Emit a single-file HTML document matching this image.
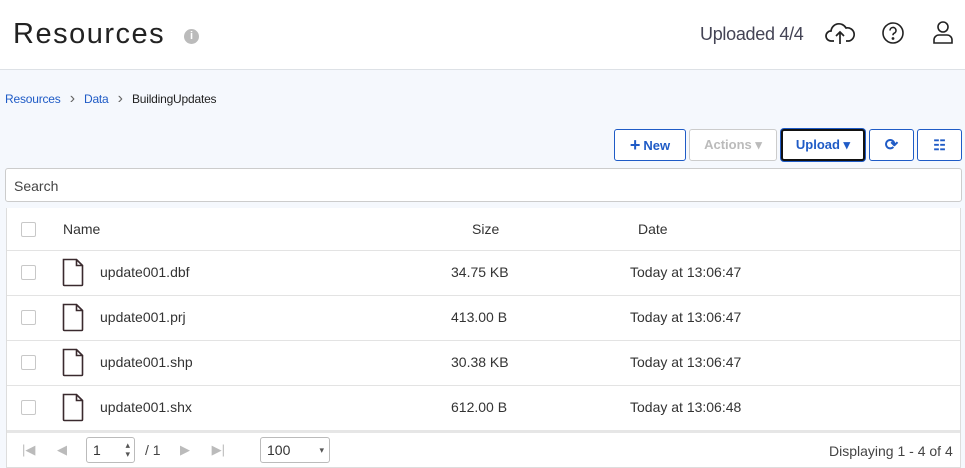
<!DOCTYPE html><html><head><style>
body{margin:0;width:965px;height:468px;overflow:hidden;background:#f5f8fd;font-family:"Liberation Sans",sans-serif;position:relative}
.a{position:absolute}
.hdr{left:0;top:0;width:965px;height:69px;background:#fff;border-bottom:1px solid #dde1e6}
.btn{position:absolute;top:129px;height:32px;box-sizing:border-box;border:1px solid #1f5bc6;border-radius:3px;background:#fff;color:#1f5bc6;font-weight:bold;font-size:13px;display:flex;align-items:center;justify-content:center}
.row{position:absolute;left:7px;width:953px;height:45px;background:#fff;border-top:1px solid #e3e3e3;font-size:14px;color:#333}
.row span{position:absolute;top:13px}
.cb{position:absolute;left:14px;top:14px;width:13px;height:13px;border:1px solid #c8c8c8;border-radius:2px;background:#fff}
</style></head><body>
<div class="a hdr"></div>
<div class="a" style="left:13px;top:18px;font-size:29px;letter-spacing:1.5px;color:#222">Resources</div>
<div class="a" style="left:184px;top:29px;width:15px;height:15px;border-radius:50%;background:#bbb;color:#fff;font-size:11px;font-weight:bold;text-align:center;line-height:15px">i</div>
<div class="a" style="left:700px;top:24px;font-size:18px;color:#445;letter-spacing:-0.3px">Uploaded 4/4</div>
<svg class="a" style="left:824px;top:20px" width="32" height="26" viewBox="0 0 32 26" fill="none" stroke="#222" stroke-width="1.7"><path d="M10 21H7a5 5 0 0 1 0-10 8 8 0 0 1 15-3 6 6 0 0 1 3 13h-3"/><path d="M16 24V12M12 16l4-4 4 4"/></svg>
<svg class="a" style="left:881px;top:21px" width="24" height="24" viewBox="0 0 24 24" fill="none" stroke="#222" stroke-width="1.6"><circle cx="12" cy="12" r="10"/><path d="M9 9.5a3 3 0 1 1 4 2.8c-.8.4-1 1-1 2"/><circle cx="12" cy="17.5" r=".6" fill="#222"/></svg>
<svg class="a" style="left:931px;top:20px" width="24" height="26" viewBox="0 0 24 26" fill="none" stroke="#222" stroke-width="1.6"><circle cx="12" cy="7" r="5"/><path d="M3 23v-3a5 5 0 0 1 5-5h8a5 5 0 0 1 5 5v3z"/></svg>
<div class="a" style="left:5px;top:92px;font-size:12px;color:#1f5bc6;letter-spacing:-0.2px">Resources <span style="color:#666;margin:0 6px;font-size:16px;line-height:12px">›</span> Data <span style="color:#666;margin:0 6px;font-size:16px;line-height:12px">›</span> <span style="color:#222">BuildingUpdates</span></div>
<div class="btn" style="left:614px;width:72px"><span style="font-size:18px;margin-right:3px">+</span>New</div>
<div class="btn" style="left:689px;width:88px;border-color:#ccc;color:#bbb">Actions ▾</div>
<div class="btn" style="left:781px;width:84px;border:2px solid #111;box-shadow:0 0 0 1px #1f5bc6">Upload ▾</div>
<div class="btn" style="left:869px;width:45px;font-size:16px">⟳</div>
<div class="btn" style="left:917px;width:45px;font-size:14px">☷</div>
<div class="a" style="left:5px;top:168px;width:957px;height:34px;box-sizing:border-box;border:1px solid #ccc;border-radius:3px;background:#fff;font-size:14px;color:#444;padding:9px 8px">Search</div>
<div class="a" style="left:6px;top:208px;width:955px;height:260px;background:#fff;border:1px solid #ddd;box-sizing:border-box"></div>
<div class="row" style="top:208px;border:none"><div class="cb"></div><span style="left:56px">Name</span><span style="left:465px">Size</span><span style="left:631px">Date</span></div>
<div class="row" style="top:250px"><div class="cb"></div><span style="left:93px">update001.dbf</span><span style="left:444px">34.75 KB</span><span style="left:623px">Today at 13:06:47</span></div>
<div class="row" style="top:295px"><div class="cb"></div><span style="left:93px">update001.prj</span><span style="left:444px">413.00 B</span><span style="left:623px">Today at 13:06:47</span></div>
<div class="row" style="top:340px"><div class="cb"></div><span style="left:93px">update001.shp</span><span style="left:444px">30.38 KB</span><span style="left:623px">Today at 13:06:47</span></div>
<div class="row" style="top:385px"><div class="cb"></div><span style="left:93px">update001.shx</span><span style="left:444px">612.00 B</span><span style="left:623px">Today at 13:06:48</span></div>
<svg class="a" style="left:62px;top:258px" width="22" height="170" viewBox="0 0 22 170" fill="none" stroke="#3a2a2e" stroke-width="1.6"><g id="f"><path d="M1.5 1.5h13l6 6v19a1 1 0 0 1-1 1h-17a1 1 0 0 1-1-1z M14.5 1.5v6h6"/></g><use href="#f" y="45"/><use href="#f" y="90"/><use href="#f" y="135"/></svg>
<div class="a" style="left:7px;top:430px;width:953px;height:3px;background:#e6e6e6"></div>
<div class="a" style="left:22px;top:442px;font-size:13px;color:#bbb">|◀&nbsp;&nbsp;&nbsp;&nbsp;&nbsp;&nbsp;◀</div>
<div class="a" style="left:86px;top:437px;width:49px;height:26px;box-sizing:border-box;border:1px solid #bbb;border-radius:3px;font-size:14px;padding:4px 6px;color:#333">1<span style="position:absolute;right:4px;top:3px;font-size:9px;line-height:9px;color:#555">▴<br>▾</span></div>
<div class="a" style="left:145px;top:442px;font-size:14px;color:#444">/ 1</div>
<div class="a" style="left:180px;top:442px;font-size:13px;color:#bbb">▶&nbsp;&nbsp;&nbsp;&nbsp;&nbsp;&nbsp;▶|</div>
<div class="a" style="left:260px;top:437px;width:70px;height:26px;box-sizing:border-box;border:1px solid #bbb;border-radius:3px;font-size:14px;padding:4px 6px;color:#333">100<span style="position:absolute;right:5px;top:7px;font-size:9px;color:#555">▾</span></div>
<div class="a" style="left:829px;top:443px;font-size:14px;color:#444">Displaying 1 - 4 of 4</div>
</body></html>
